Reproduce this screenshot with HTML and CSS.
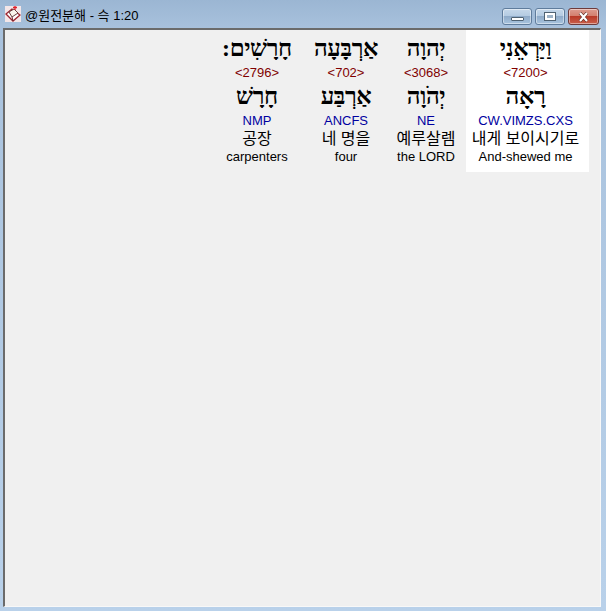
FILE: index.html
```html
<!DOCTYPE html>
<html>

<head>
    <title>@원전분해 - 슥 1:20</title>
    <link rel="stylesheet" href="styles.css">
</head>

<body>
    <div class="window">
        <div class="title-bar">
            <svg class="app-icon" viewBox="0 0 16 16">
                <rect width="16" height="16" fill="#f4e6e8" />
                <path d="M1 8 L7 3 L15 9 L8 15 Z" fill="#fff" stroke="#9c2430" stroke-width="1.3" />
                <path d="M4 6 L9 3 L13 7 L7 11 Z" fill="#f8f4ec" stroke="#6a4040" stroke-width="1" />
                <path d="M7 11 L8 15" stroke="#6a2a30" stroke-width="1" />
                <path d="M10 0 V4 M8 1.5 H12" stroke="#e0202c" stroke-width="1.3" />
            </svg>
            <span class="title-text">@원전분해 - 슥 1:20</span>
            <div class="window-buttons">
                <div class="win-button">
                    <div class="min-glyph"></div>
                </div>
                <div class="win-button">
                    <div class="max-glyph"></div>
                </div>
                <div class="win-button close">
                    <svg class="close-glyph" viewBox="0 0 13 10">
                        <path d="M3 1 L10 9 M10 1 L3 9" stroke="#5a2a22" stroke-width="3.4" />
                        <path d="M3 1 L10 9 M10 1 L3 9" stroke="#fff" stroke-width="2.2" />
                    </svg>
                </div>
            </div>
        </div>
        <div class="client">
            <div class="word-row">
                <div class="word">
                    <div class="hebrew" dir="rtl">חָרָשִׁים:</div>
                    <div class="strong">&lt;2796&gt;</div>
                    <div class="hebrew lemma" dir="rtl">חָרָשׁ</div>
                    <div class="parsing">NMP</div>
                    <div class="korean">공장</div>
                    <div class="english">carpenters</div>
                </div>
                <div class="word">
                    <div class="hebrew" dir="rtl">אַרְבָּעָה</div>
                    <div class="strong">&lt;702&gt;</div>
                    <div class="hebrew lemma" dir="rtl">אַרְבַּע</div>
                    <div class="parsing">ANCFS</div>
                    <div class="korean">네 명을</div>
                    <div class="english">four</div>
                </div>
                <div class="word">
                    <div class="hebrew" dir="rtl">יְהוָה</div>
                    <div class="strong">&lt;3068&gt;</div>
                    <div class="hebrew lemma" dir="rtl">יְהֹוָה</div>
                    <div class="parsing">NE</div>
                    <div class="korean">예루살렘</div>
                    <div class="english">the LORD</div>
                </div>
                <div class="word current">
                    <div class="hebrew" dir="rtl">וַיַּרְאֵנִי</div>
                    <div class="strong">&lt;7200&gt;</div>
                    <div class="hebrew lemma" dir="rtl">רָאָה</div>
                    <div class="parsing">CW.VIMZS.CXS</div>
                    <div class="korean">내게 보이시기로</div>
                    <div class="english">And-shewed me</div>
                </div>
            </div>
        </div>
    </div>
</body>

</html>
```

FILE: styles.css
```css
html, body {
    margin: 0;
    padding: 0;
    height: 100%;
}

body {
    font-family: "Liberation Sans", "Noto Sans CJK KR", sans-serif;
    overflow: hidden;
}

.window {
    width: 606px;
    height: 611px;
    box-sizing: border-box;
    padding: 0 5px 4px 3px;
    display: flex;
    flex-direction: column;
    background: linear-gradient(to bottom, #9bb6d3 0, #a9c2dd 30px, #b9d1ea 100%);
}

.title-bar {
    height: 28px;
    flex-shrink: 0;
    display: flex;
    align-items: center;
    gap: 4px;
}

.app-icon {
    width: 16px;
    height: 16px;
    margin-left: 2px;
}

.title-text {
    font-size: 13px;
    color: #000;
}

.window-buttons {
    margin-left: auto;
    margin-right: 2px;
    margin-top: 5px;
    margin-bottom: 0;
    display: flex;
    gap: 3px;
}

.win-button {
    width: 30px;
    height: 17px;
    box-sizing: border-box;
    border: 1px solid #5f7c9c;
    border-radius: 3px;
    display: flex;
    align-items: center;
    justify-content: center;
    background: linear-gradient(to bottom, #c6d8ea 0, #b4cbe2 45%, #8fabc9 50%, #a9c4de 100%);
    box-shadow: inset 0 0 0 1px rgba(255, 255, 255, 0.45);
}

.win-button.close {
    width: 31px;
    border-color: #6e3b3b;
    background: linear-gradient(to bottom, #dc9c90 0, #d4806f 45%, #b93a28 50%, #c9604c 100%);
}

.min-glyph {
    width: 13px;
    height: 4px;
    margin-top: 5px;
    background: #fff;
    border: 1px solid #4f6272;
    border-radius: 1px;
    box-sizing: border-box;
}

.max-glyph {
    width: 12px;
    height: 9px;
    box-sizing: border-box;
    background: #9fb4c8;
    border: 1px solid #4f6272;
    box-shadow: inset 0 0 0 2px #fff;
}

.close-glyph {
    width: 13px;
    height: 10px;
}

.client {
    flex: 1;
    background: #f0f0f0;
    border-top: 2px solid #6b6b6b;
    border-left: 2px solid #6b6b6b;
    border-right: 1px solid #f8f8f8;
    border-bottom: 1px solid #f8f8f8;
    padding-right: 11px;
}

.word-row {
    display: grid;
    grid-template-columns: 98px 80px 80px 123px;
    justify-content: end;
}

.word {
    height: 142px;
    display: flex;
    flex-direction: column;
    align-items: center;
    text-align: center;
    white-space: nowrap;
}

.word.current {
    background: #fff;
    padding-right: 4px;
    box-sizing: border-box;
}

.hebrew {
    font-family: "Liberation Serif", "DejaVu Serif", serif;
    font-size: 24px;
    font-weight: bold;
    letter-spacing: -0.4px;
    line-height: 36px;
    color: #000;
}

.lemma {
    line-height: 33px;
}

.strong {
    font-size: 13px;
    line-height: 14px;
    color: #800000;
}

.parsing {
    font-size: 13px;
    line-height: 16px;
    color: #0000a0;
}

.korean {
    font-size: 16px;
    line-height: 20px;
    color: #000;
}

.english {
    font-size: 13px;
    line-height: 15px;
    color: #000;
}
```
